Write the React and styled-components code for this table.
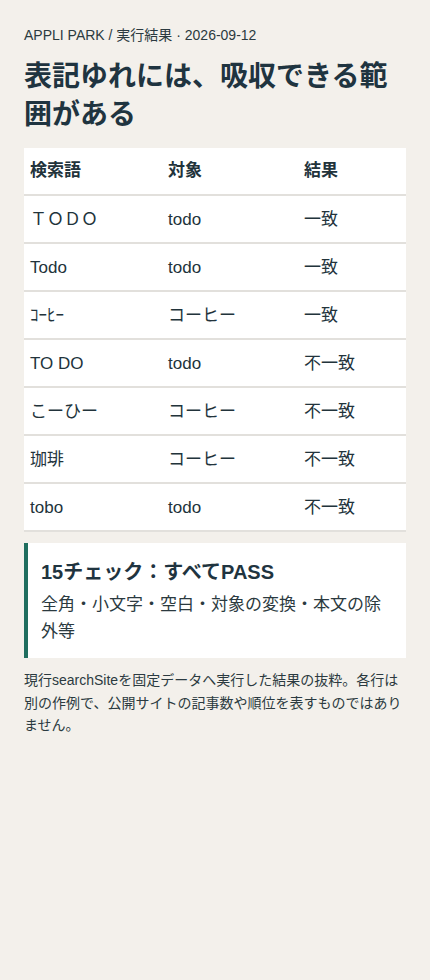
import styled, { createGlobalStyle } from "styled-components";

const rows = [
  ["ＴＯＤＯ", "todo", "一致"],
  ["Todo", "todo", "一致"],
  ["ｺｰﾋｰ", "コーヒー", "一致"],
  ["TO DO", "todo", "不一致"],
  ["こーひー", "コーヒー", "不一致"],
  ["珈琲", "コーヒー", "不一致"],
  ["tobo", "todo", "不一致"],
];

export default function App() {
  return (
    <>
      <GlobalStyle />
      <Page>
        <Crumb>APPLI PARK / 実行結果 · 2026-09-12</Crumb>
        <Title>表記ゆれには、吸収できる範囲がある</Title>
        <ResultTable>
          <thead>
            <tr>
              <Th>検索語</Th>
              <Th>対象</Th>
              <Th>結果</Th>
            </tr>
          </thead>
          <tbody>
            {rows.map((r, i) => (
              <tr key={i}>
                <Td>{r[0]}</Td>
                <Td>{r[1]}</Td>
                <Td>{r[2]}</Td>
              </tr>
            ))}
          </tbody>
        </ResultTable>
        <Callout>
          <CalloutTitle>15チェック：すべてPASS</CalloutTitle>
          <CalloutText>全角・小文字・空白・対象の変換・本文の除外等</CalloutText>
        </Callout>
        <Note>
          現行searchSiteを固定データへ実行した結果の抜粋。各行は別の作例で、公開サイトの記事数や順位を表すものではありません。
        </Note>
      </Page>
    </>
  );
}

const GlobalStyle = createGlobalStyle`
  html, body {
    margin: 0;
    background: #f3f0eb;
  }
  body {
    font-family: "Liberation Sans", "Noto Sans CJK JP", sans-serif;
    color: #22333b;
  }
`;

const Page = styled.div`
  padding: 26px 24px 40px;
`;

const Crumb = styled.div`
  font-size: 14px;
  line-height: 18px;
  color: #2b3a40;
`;

const Title = styled.h1`
  margin: 14px 0 14px;
  font-size: 28px;
  line-height: 38px;
  font-weight: 700;
  color: #1f3440;
`;

const ResultTable = styled.table`
  width: 100%;
  border-collapse: collapse;
  background: #fff;
  table-layout: fixed;

  th:nth-child(1), td:nth-child(1) { width: 126px; }
  th:nth-child(2), td:nth-child(2) { width: 124px; }
`;

const Th = styled.th`
  text-align: left;
  font-size: 17px;
  font-weight: 700;
  line-height: 22px;
  padding: 12px 6px;
  border-bottom: 2px solid #e2e0dc;
`;

const Td = styled.td`
  font-size: 17px;
  line-height: 22px;
  padding: 13px 6px 11px;
  border-bottom: 2px solid #e2e0dc;
`;

const Callout = styled.div`
  margin-top: 11px;
  background: #fff;
  border-left: 4px solid #1f6e5f;
  padding: 15px 14px 13px 13px;
`;

const CalloutTitle = styled.div`
  font-size: 20px;
  line-height: 28px;
  font-weight: 700;
  color: #1f3440;
`;

const CalloutText = styled.div`
  margin-top: 5px;
  font-size: 17px;
  line-height: 27px;
  color: #2b3a40;
`;

const Note = styled.p`
  margin: 11px 0 0;
  font-size: 14px;
  line-height: 22.5px;
  color: #2b3a40;
`;
